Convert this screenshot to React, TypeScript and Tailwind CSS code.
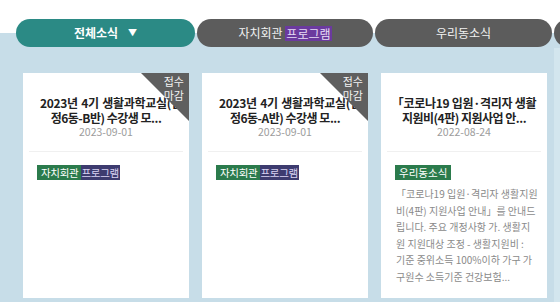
import React from 'react';

const font = { fontFamily: '"Noto Sans CJK KR", "Noto Sans", sans-serif' };

function Ribbon() {
  return (
    <div className="absolute right-0 top-0 h-[48px] w-[48px]">
      <div className="absolute inset-0 bg-[#5f5f5f] [clip-path:polygon(0_0,100%_0,100%_100%)]" />
      <div className="absolute right-[5px] top-[1px] text-center text-[11px] leading-[14px] text-[#f2f2f2]">
        <div>접수</div>
        <div>마감</div>
      </div>
    </div>
  );
}

function ProgramTag() {
  return (
    <span className="inline-flex h-[15px] items-center bg-[#2b7b4c] pl-[4px] text-[10.5px] leading-[15px] tracking-[-0.3px] text-white">
      자치회관&nbsp;
      <span className="bg-[#3d3b6f] px-[1px] text-[#d9d2f2]">프로그램</span>
    </span>
  );
}

interface CardProps {
  line1: string;
  line1Offset?: boolean;
  line2: string;
  date: string;
  closed?: boolean;
  tag: React.ReactNode;
  body?: string[];
}

function NewsCard({ line1, line1Offset, line2, date, closed, tag, body }: CardProps) {
  return (
    <div className="relative h-[225px] w-[166px] shrink-0 overflow-hidden bg-white pt-[22px]">
      <div className="text-[12px] font-bold leading-[15px] tracking-[-0.3px] text-[#222]">
        <div className={line1Offset ? 'whitespace-nowrap pl-[17px] [word-spacing:1px]' : 'whitespace-nowrap text-center'}>
          {line1}
        </div>
        <div className="whitespace-nowrap text-center tracking-[-0.5px]">{line2}</div>
      </div>
      <div className="text-center text-[10.5px] leading-[14px] text-[#9c9c9c]">{date}</div>
      <div className="mx-[6px] mt-[12px] border-t border-[#f0f0f0]" />
      <div className="mt-[6px] px-[14px]">{tag}</div>
      {body && (
        <div className="mt-[4px] px-[15px] text-[10px] leading-[16.5px] text-[#8a8a8a]">
          {body.map((l) => (
            <div key={l} className="whitespace-nowrap">
              {l}
            </div>
          ))}
        </div>
      )}
      {closed && <Ribbon />}
    </div>
  );
}

export default function App() {
  return (
    <div
      className="relative h-[302px] w-[560px] overflow-hidden bg-[linear-gradient(to_bottom,#ffffff_0px,#ffffff_33px,#c7dde8_33px)]"
      style={font}
    >
      <div className="absolute bottom-0 right-0 top-[48px] w-[6px] bg-[#d3e6ee]" />
      <div className="relative flex gap-[2px] pl-[16px] pt-[19px]">
        <div className="flex h-[28px] w-[179px] shrink-0 items-center justify-center rounded-[14px] bg-[#2b8a85] text-[12px] font-bold text-white">
          전체소식
          <span className="ml-[10px] text-[9px]">▼</span>
        </div>
        <div className="flex h-[28px] w-[176px] shrink-0 items-center justify-center rounded-[14px] bg-[#5c5c5c] text-[12px] text-[#f2f2f2]">
          자치회관&nbsp;
          <span className="bg-[#6b3a9e] px-[1px] leading-[15px] text-[#e6dcf5]">프로그램</span>
        </div>
        <div className="flex h-[28px] w-[177px] shrink-0 items-center justify-center rounded-[14px] bg-[#5c5c5c] text-[12px] text-[#f2f2f2]">
          우리동소식
        </div>
        <div className="h-[28px] w-[177px] shrink-0 rounded-[14px] bg-[#5c5c5c]" />
      </div>
      <div className="relative mt-[26px] flex gap-[13px] pl-[23px]">
        <NewsCard
          closed
          line1="2023년 4기 생활과학교실(신"
          line1Offset
          line2="정6동-B반) 수강생 모..."
          date="2023-09-01"
          tag={<ProgramTag />}
        />
        <NewsCard
          closed
          line1="2023년 4기 생활과학교실(신"
          line1Offset
          line2="정6동-A반) 수강생 모..."
          date="2023-09-01"
          tag={<ProgramTag />}
        />
        <NewsCard
          line1="「코로나19 입원·격리자 생활"
          line2="지원비(4판) 지원사업 안..."
          date="2022-08-24"
          tag={
            <span className="inline-block h-[15px] bg-[#2b7b4c] px-[4px] text-[10.5px] leading-[15px] text-white">
              우리동소식
            </span>
          }
          body={[
            '「코로나19 입원·격리자 생활지원',
            '비(4판) 지원사업 안내」를 안내드',
            '립니다. 주요 개정사항 가. 생활지',
            '원 지원대상 조정 - 생활지원비 :',
            '기준 중위소득 100%이하 가구 가',
            '구원수 소득기준 건강보험...',
          ]}
        />
      </div>
    </div>
  );
}
